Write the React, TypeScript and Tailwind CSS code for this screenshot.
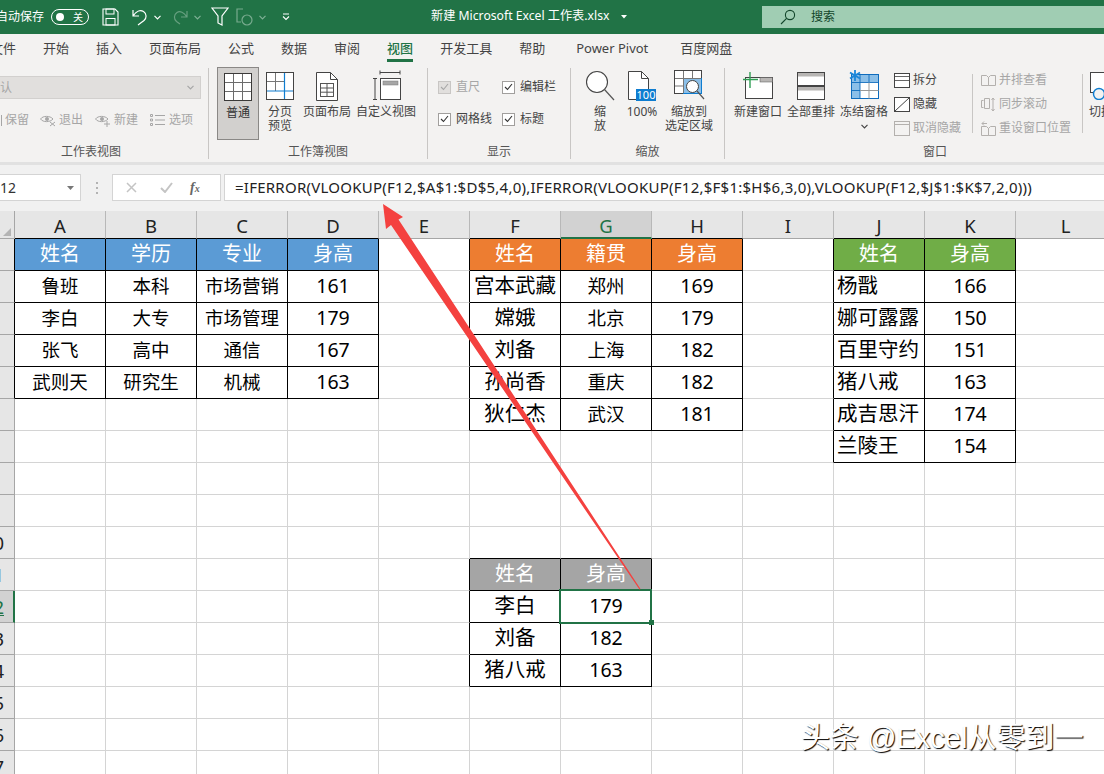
import React from "react";

const ui = "font-['Noto_Sans','Noto_Sans_CJK_SC',sans-serif]";

function Chev({ c = "#fff", className = "" }: { c?: string; className?: string }) {
  return (
    <svg width="7" height="5" viewBox="0 0 7 5" className={className}>
      <polyline points="0.5,0.8 3.5,3.8 6.5,0.8" fill="none" stroke={c} strokeWidth="1.2" />
    </svg>
  );
}

function TitleBar() {
  return (
    <div className="h-[34px] bg-[#217346] flex items-center text-white overflow-hidden shrink-0">
      <span className="text-[12px] leading-none whitespace-nowrap w-[51px] ml-[-4px] shrink-0">自动保存</span>
      <div className="ml-[4px] w-[38px] h-[16px] rounded-full border border-white flex items-center justify-between pl-[4px] pr-[5px] shrink-0">
        <span className="w-[8px] h-[8px] rounded-full bg-white" />
        <span className="text-[10px] leading-none">关</span>
      </div>
      <svg width="17" height="18" viewBox="0 0 17 18" className="ml-[13px] shrink-0">
        <path d="M1 1h12l3 3v13H1z" fill="none" stroke="#fff" strokeWidth="1.1" />
        <rect x="4" y="1" width="8" height="5" fill="none" stroke="#fff" />
        <rect x="4" y="10.5" width="9" height="6.5" fill="none" stroke="#fff" />
      </svg>
      <svg width="16" height="18" viewBox="0 0 16 18" className="ml-[13px] shrink-0">
        <path d="M1 2v6h6M1.5 7.5C4 3.5 8 1.5 11.5 3.5c3.5 2.3 3.2 6.5 0.5 9L6 17" fill="none" stroke="#fff" strokeWidth="1.2" />
      </svg>
      <Chev className="ml-[6px] shrink-0" />
      <svg width="15" height="16" viewBox="0 0 15 16" className="ml-[12px] shrink-0 opacity-40">
        <path d="M14 2v6H8M13.5 7.5C11 3.5 7 1.5 4 3.5 0.5 5.8 0.8 10 3.5 12.5L7 15" fill="none" stroke="#cfe3d7" strokeWidth="1.2" />
      </svg>
      <Chev c="#7fb096" className="ml-[6px] shrink-0" />
      <svg width="18" height="20" viewBox="0 0 18 20" className="ml-[10px] shrink-0">
        <path d="M1 1h16l-6 8v9l-4-2V9z" fill="none" stroke="#fff" strokeWidth="1.2" />
      </svg>
      <svg width="17" height="18" viewBox="0 0 17 18" className="ml-[7px] shrink-0 opacity-50">
        <path d="M7 1H1v13h4" fill="none" stroke="#cfe3d7" strokeWidth="1.2" />
        <circle cx="11" cy="12" r="5" fill="none" stroke="#cfe3d7" strokeWidth="1.2" />
      </svg>
      <Chev c="#7fb096" className="ml-[6px] shrink-0" />
      <svg width="8" height="8" viewBox="0 0 8 8" className="ml-[16px] shrink-0">
        <path d="M1 1h6" stroke="#fff" />
        <polyline points="1,3.5 4,6.5 7,3.5" fill="none" stroke="#fff" strokeWidth="1.1" />
      </svg>
      <span className="ml-[141px] w-[184px] pb-[2px] text-[12.2px] leading-none whitespace-nowrap shrink-0">新建 Microsoft Excel 工作表.xlsx</span>
      <svg width="6" height="4" viewBox="0 0 6 4" className="ml-[6px] shrink-0">
        <path d="M0 0h6L3 3.5z" fill="#fff" />
      </svg>
      <div className="ml-[135px] h-[22px] w-[350px] bg-[#a0cdb3] flex items-center shrink-0 text-[#12452a]">
        <svg width="16" height="16" viewBox="0 0 16 16" className="ml-[18px] shrink-0">
          <circle cx="10" cy="6" r="4.6" fill="none" stroke="#12452a" strokeWidth="1.1" />
          <path d="M6.6 9.4L1 15" stroke="#12452a" strokeWidth="1.1" />
        </svg>
        <span className="ml-[15px] text-[12px] leading-none">搜索</span>
      </div>
    </div>
  );
}

const tabs: [string, string][] = [
  ["文件", "ml-[-10px]"],
  ["开始", "ml-[27px]"],
  ["插入", "ml-[27px]"],
  ["页面布局", "ml-[27px]"],
  ["公式", "ml-[27px]"],
  ["数据", "ml-[27px]"],
  ["审阅", "ml-[27px]"],
  ["视图", "ml-[27px]"],
  ["开发工具", "ml-[27px]"],
  ["帮助", "ml-[27px]"],
  ["Power Pivot", "ml-[31px]"],
  ["百度网盘", "ml-[32px]"],
];

function Tabs() {
  return (
    <div className="h-[32px] bg-[#f3f2f1] flex items-start shrink-0 text-[13px] text-[#444]">
      {tabs.map(([t, m]) => (
        <div key={t} className={`${m} h-[28px] flex flex-col items-center whitespace-nowrap shrink-0 relative ${t === "视图" ? "text-[#217346] font-medium" : ""}`}>
          <span className="leading-[28px]">{t}</span>
          {t === "视图" && <span className="absolute left-0 right-0 top-[25px] h-[3px] bg-[#217346]" />}
        </div>
      ))}
    </div>
  );
}

function IconNormal() {
  return (
    <svg width="28" height="28" viewBox="0 0 28 28">
      <rect x=".5" y=".5" width="27" height="27" fill="#fff" stroke="#3b3a39" />
      <path d="M9.5 1v26M18.5 1v26M1 9.5h26M1 18.5h26" stroke="#6b6b6b" />
    </svg>
  );
}
function IconBreak() {
  return (
    <svg width="28" height="28" viewBox="0 0 28 28">
      <rect x=".5" y=".5" width="27" height="27" fill="#fff" stroke="#444" />
      <path d="M9.5 1v18M1 9.5h18" stroke="#777" />
      <path d="M18.5 1v26M1 19h26" stroke="#0f7dd0" strokeWidth="1.2" />
    </svg>
  );
}
function IconPage() {
  return (
    <svg width="22" height="29" viewBox="0 0 22 29">
      <path d="M.5.5h14l7 7v21H.5z" fill="#fff" stroke="#444" />
      <path d="M14.5.5v7h7" fill="none" stroke="#444" />
      <rect x="4.5" y="11.5" width="13" height="13" fill="none" stroke="#555" />
      <path d="M4.5 16h13M4.5 20.2h13M11 11.5v13" stroke="#555" />
    </svg>
  );
}
function IconCustom() {
  return (
    <svg width="29" height="31" viewBox="0 0 29 31">
      <path d="M8 2.5h20M8 .5v4M28 .5v4" stroke="#444" />
      <path d="M1 8.5h4M1 29.5h4M3 8.5v21" stroke="#444" />
      <rect x="8.5" y="8.5" width="20" height="21" fill="#fff" stroke="#444" />
      <rect x="11" y="11" width="15" height="4" fill="#a6a6a6" stroke="#777" strokeWidth=".5" />
    </svg>
  );
}
function IconZoom() {
  return (
    <svg width="30" height="31" viewBox="0 0 30 31">
      <circle cx="12" cy="12" r="10.5" fill="#fff" stroke="#444" strokeWidth="1.1" />
      <path d="M19.5 19.5L29 30" stroke="#555" strokeWidth="1.2" />
    </svg>
  );
}
function Icon100() {
  return (
    <svg width="28" height="30" viewBox="0 0 28 30">
      <path d="M.5.5h13l7 7v21H.5z" fill="#fff" stroke="#444" />
      <path d="M13.5.5v7h7" fill="none" stroke="#444" />
      <rect x="8" y="18" width="20" height="12" fill="#0f7dd0" />
      <text x="18" y="28" textAnchor="middle" fontSize="11" fill="#fff">100</text>
    </svg>
  );
}
function IconZoomSel() {
  return (
    <svg width="31" height="31" viewBox="0 0 31 31">
      <rect x=".5" y=".5" width="27" height="23" fill="#fff" stroke="#444" />
      <rect x="9.5" y="8.5" width="18" height="15" fill="#8bbfe8" stroke="#0f7dd0" />
      <path d="M9.5 1v22M18.5 1v8M1 8.5h26M1 16h9" stroke="#777" />
      <circle cx="18.5" cy="16.5" r="6" fill="#fff" stroke="#444" />
      <path d="M23 21l7 8" stroke="#555" strokeWidth="1.2" />
    </svg>
  );
}
function IconNewWin() {
  return (
    <svg width="30" height="28" viewBox="0 0 30 28">
      <rect x="2.5" y="5.5" width="27" height="21" fill="#fff" stroke="#444" />
      <rect x="17" y="5.5" width="12.5" height="4.5" fill="#b8b6b4" stroke="#555" strokeWidth=".5" />
      <path d="M7 0v16M0 7.5h15" stroke="#2f9e54" strokeWidth="1.4" />
    </svg>
  );
}
function IconArrange() {
  return (
    <svg width="28" height="28" viewBox="0 0 28 28">
      <rect x=".5" y=".5" width="27" height="13" fill="#fff" stroke="#444" />
      <rect x="1" y="1" width="26" height="3.5" fill="#b8b6b4" />
      <rect x=".5" y="14.5" width="27" height="13" fill="#fff" stroke="#444" />
      <rect x="1" y="15" width="26" height="3.5" fill="#b8b6b4" />
    </svg>
  );
}
function IconFreeze() {
  return (
    <svg width="30" height="30" viewBox="0 0 30 30">
      <rect x="2.5" y="4.5" width="27" height="24" fill="#fff" stroke="#0f6cbd" />
      <path d="M3 5h26v7H11v16H3z" fill="#8bbfe8" />
      <path d="M11 4.5v24M20 4.5v8M2.5 12.5h27M2.5 20.5h8.5" stroke="#0f6cbd" strokeWidth=".9" />
      <path d="M20 12.5v16M11 20.5h18.5" stroke="#999" />
      <path d="M6 0v11M1 2.5l10 6M11 2.5l-10 6" stroke="#1b87d9" strokeWidth="1.8" />
    </svg>
  );
}
function IconSplit() {
  return (
    <svg width="16" height="15" viewBox="0 0 16 15">
      <rect x=".5" y=".5" width="15" height="14" fill="#fff" stroke="#444" />
      <path d="M1 3.5h14M1 7.5h14" stroke="#666" />
    </svg>
  );
}
function IconHide() {
  return (
    <svg width="16" height="15" viewBox="0 0 16 15">
      <rect x=".5" y=".5" width="15" height="14" fill="#fff" stroke="#444" />
      <path d="M1 14L15 1" stroke="#444" />
    </svg>
  );
}
function IconUnhide() {
  return (
    <svg width="16" height="15" viewBox="0 0 16 15">
      <rect x=".5" y=".5" width="15" height="14" fill="none" stroke="#b3b0ad" />
      <path d="M1 3.5h14" stroke="#b3b0ad" />
    </svg>
  );
}
function IconBook() {
  return (
    <svg width="15" height="12" viewBox="0 0 15 12">
      <path d="M.5 1.5h5l2 2v8h-7zM7.5 3.5l2-2h5v10h-7z" fill="none" stroke="#b3b0ad" />
    </svg>
  );
}
function IconSync() {
  return (
    <svg width="15" height="15" viewBox="0 0 15 15">
      <path d="M2.5 3.5h-2v7h2M3.5 1.5h5v10h-5z" fill="none" stroke="#b3b0ad" />
      <path d="M12 1v13M10.5 3l1.5-2 1.5 2M10.5 12l1.5 2 1.5-2" fill="none" stroke="#b3b0ad" />
    </svg>
  );
}
function IconReset() {
  return (
    <svg width="15" height="16" viewBox="0 0 15 16">
      <path d="M.5 6.5h5l2 2v7h-7zM7.5 8.5l2-2h5v9h-7z" fill="none" stroke="#b3b0ad" />
      <path d="M6 3.5H1M3 1.5l-2 2 2 2" fill="none" stroke="#b3b0ad" />
    </svg>
  );
}
function IconEye() {
  return (
    <svg width="16" height="13" viewBox="0 0 16 13">
      <path d="M.5 5C3 1.5 10 1.5 13 5 10 8.5 3 8.5.5 5z" fill="none" stroke="#a6a6a6" />
      <circle cx="7" cy="5" r="2" fill="#a6a6a6" />
      <path d="M10 8l5 4M15 8l-5 4" stroke="#a6a6a6" />
    </svg>
  );
}
function IconEyePlus() {
  return (
    <svg width="16" height="13" viewBox="0 0 16 13">
      <path d="M.5 5C3 1.5 10 1.5 13 5 10 8.5 3 8.5.5 5z" fill="none" stroke="#a6a6a6" />
      <circle cx="7" cy="5" r="2" fill="#a6a6a6" />
      <path d="M12 7v6M9 10h6" stroke="#a6a6a6" />
    </svg>
  );
}
function IconList() {
  return (
    <svg width="15" height="12" viewBox="0 0 15 12">
      <path d="M.5.5h2v2h-2zM.5 5h2v2h-2zM.5 9.5h2v2h-2z" fill="none" stroke="#a6a6a6" />
      <path d="M5 1.5h10M5 6h10M5 10.5h10" stroke="#a6a6a6" />
    </svg>
  );
}

function Big({ w, m = "", icon, label, h = "h-[28px]", active }: { w: string; m?: string; icon: React.ReactNode; label: React.ReactNode; h?: string; active?: boolean }) {
  return (
    <div className={`${w} ${m} h-[73px] flex flex-col items-center pt-[5px] shrink-0 text-[12px] leading-[14px] text-center text-[#444] ${active ? "bg-[#d2d0ce] border border-[#8a8886] pt-[4px]" : ""}`}>
      <div className={`${h} flex items-end justify-center shrink-0`}>{icon}</div>
      <div className={`${h === "h-[28px]" ? "mt-[5px]" : "mt-[4px]"} whitespace-nowrap ${active ? "text-[#333]" : ""}`}>{label}</div>
    </div>
  );
}

function Group({ w, label, labelClass = "", children }: { w: string; label: string; labelClass?: string; children: React.ReactNode }) {
  return (
    <div className={`${w} h-[91px] mt-[2px] border-r border-[#c8c6c4] flex flex-col shrink-0`}>
      <div className="flex-1 flex flex-col min-h-0">{children}</div>
      <div className={`h-[14px] leading-[14px] text-[12px] text-center text-[#555] ${labelClass}`}>{label}</div>
    </div>
  );
}

function Check({ label, disabled }: { label: string; disabled?: boolean }) {
  return (
    <div className={`w-[64px] h-[14px] flex items-center shrink-0 whitespace-nowrap text-[12px] ${disabled ? "text-[#a6a6a6]" : "text-[#444]"}`}>
      <span className={`w-[13px] h-[13px] border flex items-center justify-center shrink-0 ${disabled ? "bg-[#e1dfdd] border-[#c8c6c4]" : "bg-white border-[#a19f9d]"}`}>
        <svg width="9" height="8" viewBox="0 0 9 8">
          <path d="M1 4l2.5 2.5L8 1" fill="none" stroke={disabled ? "#a6a6a6" : "#333"} strokeWidth="1.1" />
        </svg>
      </span>
      <span className="ml-[5px]">{label}</span>
    </div>
  );
}

function SmallRow({ icon, label, disabled }: { icon: React.ReactNode; label: string; disabled?: boolean }) {
  return (
    <div className={`h-[24px] flex items-center whitespace-nowrap text-[12px] ${disabled ? "text-[#a6a6a6]" : "text-[#444]"}`}>
      <span className="w-[16px] flex justify-center shrink-0">{icon}</span>
      <span className="ml-[3px]">{label}</span>
    </div>
  );
}

function Ribbon() {
  return (
    <div className="h-[96px] bg-[#f3f2f1] flex items-start shrink-0 overflow-hidden">
      <Group w="w-[209px]" label="工作表视图" labelClass="pr-[26px]">
        <div className="mt-[8px] h-[23px] w-[201px] bg-[#e1dfdd] border border-[#d2d0ce] border-l-0 flex items-center justify-between pr-[6px] text-[12px] text-[#a6a6a6]">
          <span className="ml-[-12px] whitespace-nowrap">默认</span>
          <Chev c="#a6a6a6" />
        </div>
        <div className="mt-[13px] h-[16px] flex items-center text-[12px] text-[#a6a6a6] whitespace-nowrap">
          <span className="w-[1px] h-[11px] ml-[1px] bg-[#a6a6a6]" />
          <span className="ml-[3px]">保留</span>
          <span className="ml-[11px]"><IconEye /></span>
          <span className="ml-[3px]">退出</span>
          <span className="ml-[12px]"><IconEyePlus /></span>
          <span className="ml-[3px]">新建</span>
          <span className="ml-[12px]"><IconList /></span>
          <span className="ml-[4px]">选项</span>
        </div>
      </Group>
      <Group w="w-[219px]" label="工作簿视图">
        <div className="flex -mt-[1px] pl-[8px]">
          <Big w="w-[42px]" active icon={<IconNormal />} label="普通" />
          <Big w="w-[34px]" m="ml-[4px]" icon={<IconBreak />} label={<>分页<br />预览</>} />
          <Big w="w-[52px]" m="ml-[4px]" icon={<IconPage />} h="h-[29px]" label="页面布局" />
          <Big w="w-[64px]" m="ml-[1px]" icon={<IconCustom />} h="h-[29px]" label="自定义视图" />
        </div>
      </Group>
      <Group w="w-[143px]" label="显示">
        <div className="pl-[10px] pt-[12px] flex flex-col gap-[18px]">
          <div className="flex">
            <Check label="直尺" disabled />
            <Check label="编辑栏" />
          </div>
          <div className="flex">
            <Check label="网格线" />
            <Check label="标题" />
          </div>
        </div>
      </Group>
      <Group w="w-[154px]" label="缩放">
        <div className="flex -mt-[1px]">
          <Big w="w-[30px]" m="ml-[14px]" icon={<IconZoom />} h="h-[29px]" label={<>缩<br />放</>} />
          <Big w="w-[30px]" m="ml-[12px]" icon={<Icon100 />} h="h-[29px]" label="100%" />
          <Big w="w-[48px]" m="ml-[8px]" icon={<IconZoomSel />} h="h-[29px]" label={<>缩放到<br />选定区域</>} />
        </div>
      </Group>
      <Group w="w-[420px] border-r-0" label="窗口">
        <div className="flex -mt-[1px]">
          <Big w="w-[48px]" m="ml-[9px]" icon={<IconNewWin />} label="新建窗口" />
          <Big w="w-[48px]" m="ml-[5px]" icon={<IconArrange />} label="全部重排" />
          <Big w="w-[48px]" m="ml-[5px]" icon={<IconFreeze />} label={<>冻结窗格<br /><Chev c="#444" className="inline" /></>} />
          <div className="ml-[6px] pt-[1px] w-[78px] shrink-0 flex flex-col">
            <SmallRow icon={<IconSplit />} label="拆分" />
            <SmallRow icon={<IconHide />} label="隐藏" />
            <SmallRow disabled icon={<IconUnhide />} label="取消隐藏" />
          </div>
          <div className="mt-[7px] w-px h-[59px] bg-[#c8c6c4] shrink-0" />
          <div className="ml-[7px] pt-[1px] w-[102px] shrink-0 flex flex-col">
            <SmallRow disabled icon={<IconBook />} label="并排查看" />
            <SmallRow disabled icon={<IconSync />} label="同步滚动" />
            <SmallRow disabled icon={<IconReset />} label="重设窗口位置" />
          </div>
          <div className="mt-[7px] w-px h-[59px] bg-[#c8c6c4] shrink-0" />
          <div className="ml-[6px] h-[73px] w-[48px] shrink-0 flex flex-col pt-[5px] text-[12px] leading-[14px] text-[#444] whitespace-nowrap">
            <svg width="32" height="28" viewBox="0 0 32 28">
              <rect x="1.5" y=".5" width="30" height="20" fill="#fff" stroke="#444" />
              <circle cx="10" cy="22" r="5.5" fill="#f3f2f1" stroke="#0f7dd0" strokeWidth="1.4" />
            </svg>
            <span className="mt-[5px]">切换窗口</span>
          </div>
        </div>
      </Group>
    </div>
  );
}

function FormulaBar() {
  return (
    <div className="h-[49px] border-t-[3px] border-[#e1e1e1] shrink-0 flex items-start pt-[9px] bg-[#f1f1f1]">
      <div className="w-[81px] h-[27px] bg-white border border-[#d4d4d4] border-l-0 flex items-center justify-between pr-[6px] shrink-0 text-[14px] text-[#333]">
        <span>12</span>
        <svg width="7" height="4" viewBox="0 0 7 4"><path d="M0 0h7L3.5 4z" fill="#777" /></svg>
      </div>
      <div className="ml-[15px] w-[2px] h-[12px] mt-[8px] flex flex-col justify-between shrink-0">
        <span className="w-[2px] h-[2px] bg-[#b3b3b3]" />
        <span className="w-[2px] h-[2px] bg-[#b3b3b3]" />
        <span className="w-[2px] h-[2px] bg-[#b3b3b3]" />
      </div>
      <div className="ml-[14px] w-[109px] h-[27px] bg-white border border-[#d4d4d4] flex items-center shrink-0">
        <svg width="11" height="11" viewBox="0 0 11 11" className="ml-[13px]"><path d="M1 1l9 9M10 1l-9 9" stroke="#c4c4c4" strokeWidth="1.5" /></svg>
        <svg width="13" height="11" viewBox="0 0 13 11" className="ml-[23px]"><path d="M1 6l4 4 7-9" fill="none" stroke="#c4c4c4" strokeWidth="2" /></svg>
        <span className="ml-[17px] text-[14px] italic leading-none text-[#666] font-['Liberation_Serif',serif] font-bold">f<span className="text-[10px]">x</span></span>
      </div>
      <div className="ml-[3px] flex-1 h-[27px] bg-white border border-[#d4d4d4] border-r-0 flex items-center pl-[10px] text-[15px] text-[#222] whitespace-nowrap overflow-hidden font-['Noto_Sans',sans-serif] tracking-[0.25px]">
        =IFERROR(VLOOKUP(F12,$A$1:$D$5,4,0),IFERROR(VLOOKUP(F12,$F$1:$H$6,3,0),VLOOKUP(F12,$J$1:$K$7,2,0)))
      </div>
    </div>
  );
}

const colNames = ["A", "B", "C", "D", "E", "F", "G", "H", "I", "J", "K", "L"];

const data: Record<string, string> = {};
function put(c0: number, r0: number, rows: string[][]) {
  rows.forEach((row, i) => row.forEach((t, j) => { data[`${c0 + j},${r0 + i}`] = t; }));
}
put(0, 1, [["姓名", "学历", "专业", "身高"], ["鲁班", "本科", "市场营销", "161"], ["李白", "大专", "市场管理", "179"], ["张飞", "高中", "通信", "167"], ["武则天", "研究生", "机械", "163"]]);
put(5, 1, [["姓名", "籍贯", "身高"], ["宫本武藏", "郑州", "169"], ["嫦娥", "北京", "179"], ["刘备", "上海", "182"], ["孙尚香", "重庆", "182"], ["狄仁杰", "武汉", "181"]]);
put(9, 1, [["姓名", "身高"], ["杨戬", "166"], ["娜可露露", "150"], ["百里守约", "151"], ["猪八戒", "163"], ["成吉思汗", "174"], ["兰陵王", "154"]]);
put(5, 11, [["姓名", "身高"], ["李白", "179"], ["刘备", "182"], ["猪八戒", "163"]]);

const inT = (c: number, r: number) => `${c},${r}` in data;
function headerBg(c: number, r: number) {
  if (r === 1 && c <= 3) return "bg-[#5b9bd5] text-white";
  if (r === 1 && c >= 5 && c <= 7) return "bg-[#ed7d31] text-white";
  if (r === 1 && c >= 9 && c <= 10) return "bg-[#70ad47] text-white";
  if (r === 11 && inT(c, r)) return "bg-[#a5a5a5] text-white";
  return "bg-white text-black";
}
function sizeOf(c: number, r: number, t?: string) {
  if (t !== undefined && /^\d+$/.test(t)) return "text-[19.5px]";
  if (r === 1 || r === 11) return "text-[20px]";
  if (c <= 3 || c === 6) return "text-[18.5px]";
  return "text-[20.5px]";
}

function Sheet() {
  const rows = Array.from({ length: 17 }, (_, i) => i + 1);
  return (
    <div className="grid grid-cols-[15px_repeat(11,91px)_100px] auto-rows-[32px] flex-1 overflow-hidden bg-white font-['Noto_Sans','Noto_Sans_CJK_SC',sans-serif]">
      <div className="h-[28px] bg-[#e6e6e6] border-b border-r border-[#a6a6a6] overflow-hidden relative">
        <div className="absolute right-[3px] bottom-[2px] w-0 h-0 border-l-[8px] border-l-transparent border-b-[8px] border-b-[#b4b4b4]" />
      </div>
      {colNames.map((n, i) => (
        <div
          key={n}
          className={`h-[28px] flex items-center justify-center text-[18.5px] pt-[3px] border-r border-[#b8b8b8] ${n === "G" ? "bg-[#d2d2d2] text-[#217346] border-b-2 border-b-[#217346]" : "bg-[#e6e6e6] text-[#222]"} ${n !== "G" && inT(i, 1) ? "border-b border-b-black" : ""} ${n !== "G" && !inT(i, 1) ? "border-b border-b-[#a6a6a6]" : ""}`}
        >
          {n}
        </div>
      ))}
      {rows.map((r) => (
        <React.Fragment key={r}>
          <div
            className={`-mt-[4px] h-[32px] flex items-center justify-end overflow-hidden text-[18.5px] border-b border-[#a6a6a6] ${r === 12 ? "bg-[#d2d2d2] text-[#217346] underline border-r-2 border-r-[#217346] pr-[9px]" : "bg-[#e6e6e6] text-[#222] border-r border-r-[#a6a6a6] pr-[10px]"} ${r >= 1 && r <= 5 ? "border-r-black" : ""}`}
          >
            {r >= 10 ? r : ""}
          </div>
          {colNames.map((_, c) => {
            const k = `${c},${r}`;
            const t = data[k];
            const blackR = inT(c, r) || inT(c + 1, r);
            const blackB = inT(c, r) || inT(c, r + 1);
            const left = c === 9 && r >= 2 && r <= 7;
            return (
              <div
                key={k}
                className={`-mt-[4px] h-[32px] relative flex items-center border-r border-b whitespace-nowrap ${k === "6,12" ? "z-10" : ""} ${r === 1 || r === 11 ? "pb-[1px]" : "pb-[2px]"} ${blackR ? "border-r-black" : "border-r-[#d4d4d4]"} ${blackB ? "border-b-black" : "border-b-[#d4d4d4]"} ${headerBg(c, r)} ${left ? "justify-start pl-[3px]" : "justify-center"} ${sizeOf(c, r, t)}`}
              >
                {t}
                {k === "6,12" && (
                  <div className="absolute -left-[2px] -top-[2px] w-[93px] h-[35px] border-2 border-[#217346]">
                    <div className="absolute -right-[4px] -bottom-[3px] w-[5px] h-[5px] bg-[#217346]" />
                  </div>
                )}
              </div>
            );
          })}
        </React.Fragment>
      ))}
    </div>
  );
}

export default function App() {
  return (
    <div className={`w-[1104px] h-[774px] relative overflow-hidden flex flex-col bg-white ${ui}`}>
      <TitleBar />
      <Tabs />
      <Ribbon />
      <FormulaBar />
      <Sheet />
      <svg width="1104" height="774" viewBox="0 0 1104 774" className="absolute left-0 top-0 z-20 pointer-events-none">
        <polygon points="383,204 403,217 398.5,219.5 640.5,589 639.5,589.5 391,225 386,229" fill="#f4413f" />
      </svg>
      <div className="absolute left-[801px] top-[720px] z-20 text-[29px] leading-[36px] whitespace-nowrap text-white font-['Liberation_Sans','Noto_Sans_CJK_SC',sans-serif] [text-shadow:1px_1px_1px_#000]">
        头条 @Excel从零到一
      </div>
    </div>
  );
}
